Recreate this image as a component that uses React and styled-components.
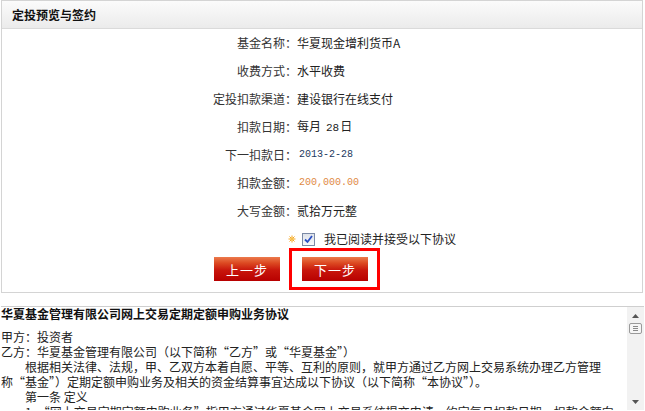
import React from 'react';
import styled, { createGlobalStyle } from 'styled-components';

const Global = createGlobalStyle`
  html, body { margin: 0; padding: 0; background: #fff; }
  body {
    font-family: "Noto Sans CJK SC", "Liberation Sans", sans-serif;
    font-size: 12px;
    color: #333;
    overflow: hidden;
  }
`;

const Page = styled.div`
  width: 645px;
  height: 411px;
  overflow: hidden;
  padding-left: 1px;
  box-sizing: border-box;
`;

const Panel = styled.section`
  width: 642px;
  height: 293px;
  box-sizing: border-box;
  border: 1px solid #d4d4d4;
  display: flex;
  flex-direction: column;
`;

const Header = styled.h2`
  margin: 0;
  height: 27px;
  box-sizing: content-box;
  border-bottom: 1px solid #dadada;
  background: linear-gradient(#fbfbfb, #ebebeb);
  display: flex;
  align-items: center;
  padding-left: 10px;
  font-size: 12px;
  font-weight: bold;
  color: #111;
`;

const Form = styled.div`
  display: flex;
  flex-direction: column;
`;

const Row = styled.div`
  display: grid;
  grid-template-columns: 295px 1fr;
  height: 28px;
  align-items: center;
  line-height: 12px;
`;

const Label = styled.div`
  text-align: right;
  color: #333;
  white-space: nowrap;
`;

const Value = styled.div`
  display: flex;
  align-items: ${p => (p.$baseline ? 'baseline' : 'center')};
  color: ${p => p.$color || '#222'};
  font-family: ${p => (p.$mono ? '"Liberation Mono", "DejaVu Sans Mono", monospace' : 'inherit')};
  font-size: ${p => (p.$mono ? '10px' : '12px')};
  padding-left: ${p => (p.$mono ? '2px' : '0')};
  white-space: nowrap;
`;

const Num = styled.span`
  font-family: "Liberation Mono", "DejaVu Sans Mono", monospace;
  font-size: 11px;
  margin: 0 1px 0 5px;
`;

const StarCell = styled.div`
  display: flex;
  justify-content: flex-end;
  align-items: center;
  padding-right: 1px;
`;

const CheckBox = styled.span`
  width: 13px;
  height: 13px;
  margin-left: 5px;
  box-sizing: border-box;
  border: 1px solid #7b8aa6;
  background: linear-gradient(#dfe3ea, #f7f8fa);
  display: flex;
  align-items: center;
  justify-content: center;
`;

const CheckText = styled.span`
  margin-left: 9px;
  color: #222;
`;

const ButtonRow = styled.div`
  display: flex;
  gap: 22px;
  padding-left: 212px;
  margin-top: 4px;
`;

const StepButton = styled.button`
  width: 66px;
  height: 24px;
  border: none;
  padding: 0;
  color: #fff;
  font-family: "Noto Sans CJK SC", sans-serif;
  font-size: 13px;
  letter-spacing: 1px;
  background: linear-gradient(#ec7a4c 0%, #dc4a22 25%, #c8160c 55%, #b80000 100%);
  cursor: pointer;
`;

const Highlight = styled.div`
  position: relative;
  &::after {
    content: '';
    position: absolute;
    top: -9px;
    bottom: -9px;
    left: -13px;
    right: -12px;
    border: 3px solid #ff0000;
    pointer-events: none;
  }
`;

const Agreement = styled.div`
  margin-top: 13px;
  width: 643px;
  height: 104px;
  box-sizing: border-box;
  border-top: 1px solid #cfcfcf;
  display: flex;
`;

const AgreementText = styled.div`
  flex: 1;
  overflow: hidden;
  color: #222;
`;

const AgreementTitle = styled.div`
  font-weight: bold;
  font-size: 12px;
  line-height: 13px;
  color: #111;
  margin-bottom: 9px;
  white-space: nowrap;
`;

const Line = styled.div`
  line-height: 15px;
  white-space: nowrap;
  padding-left: ${p => (p.$indent ? '24px' : '0')};
`;

const Scrollbar = styled.div`
  width: 17px;
  background: #f2f2f2;
  display: flex;
  flex-direction: column;
  align-items: center;
`;

const ScrollButton = styled.div`
  width: 17px;
  height: 17px;
  display: flex;
  align-items: center;
  justify-content: center;
`;

const Thumb = styled.div`
  width: 13px;
  height: 11px;
  box-sizing: border-box;
  border: 1px solid #9a9a9a;
  border-radius: 2px;
  background: #f6f6f6;
  display: flex;
  flex-direction: column;
  justify-content: center;
  gap: 1px;
  padding: 0 3px;
  margin-top: -1px;
`;

const Grip = styled.span`
  display: block;
  height: 1px;
  background: #8a8a8a;
`;

const Track = styled.div`
  flex: 1;
`;

const Star = () => (
  <svg width="8" height="8" viewBox="0 0 8 8">
    <g stroke="#f5a623" strokeWidth="1">
      <line x1="4" y1="0.5" x2="4" y2="7.5" />
      <line x1="0.5" y1="4" x2="7.5" y2="4" />
      <line x1="1.5" y1="1.5" x2="6.5" y2="6.5" />
      <line x1="6.5" y1="1.5" x2="1.5" y2="6.5" />
    </g>
    <circle cx="4" cy="4" r="1.6" fill="#f7c04a" />
  </svg>
);

const Tick = () => (
  <svg width="9" height="9" viewBox="0 0 9 9">
    <path d="M1 4.5 L3.5 7 L8 1" fill="none" stroke="#2a4fc4" strokeWidth="1.8" />
  </svg>
);

const Arrow = ({ down }) => (
  <svg width="7" height="4" viewBox="0 0 7 4">
    <path d={down ? 'M0 0 H7 L3.5 4 Z' : 'M0 4 H7 L3.5 0 Z'} fill="#555" />
  </svg>
);

const rows = [
  { label: '基金名称：', value: '华夏现金增利货币A' },
  { label: '收费方式：', value: '水平收费' },
  { label: '定投扣款渠道：', value: '建设银行在线支付' },
];

export default function App() {
  return (
    <>
      <Global />
      <Page>
        <Panel>
          <Header>定投预览与签约</Header>
          <Form>
            {rows.map(r => (
              <Row key={r.label}>
                <Label>{r.label}</Label>
                <Value>{r.value}</Value>
              </Row>
            ))}
            <Row>
              <Label>扣款日期：</Label>
              <Value $baseline>每月<Num>28</Num>日</Value>
            </Row>
            <Row>
              <Label>下一扣款日：</Label>
              <Value $mono $color="#233a60">2013-2-28</Value>
            </Row>
            <Row>
              <Label>扣款金额：</Label>
              <Value $mono $color="#e08a45">200,000.00</Value>
            </Row>
            <Row>
              <Label>大写金额：</Label>
              <Value>贰拾万元整</Value>
            </Row>
            <Row>
              <StarCell><Star /></StarCell>
              <Value>
                <CheckBox><Tick /></CheckBox>
                <CheckText>我已阅读并接受以下协议</CheckText>
              </Value>
            </Row>
          </Form>
          <ButtonRow>
            <StepButton>上一步</StepButton>
            <Highlight>
              <StepButton>下一步</StepButton>
            </Highlight>
          </ButtonRow>
        </Panel>
        <Agreement>
          <AgreementText>
            <AgreementTitle>华夏基金管理有限公司网上交易定期定额申购业务协议</AgreementTitle>
            <Line>甲方：投资者</Line>
            <Line>乙方：华夏基金管理有限公司（以下简称“乙方”或“华夏基金”）</Line>
            <Line $indent>根据相关法律、法规，甲、乙双方本着自愿、平等、互利的原则，就甲方通过乙方网上交易系统办理乙方管理</Line>
            <Line>称“基金”）定期定额申购业务及相关的资金结算事宜达成以下协议（以下简称“本协议”）。</Line>
            <Line $indent>第一条  定义</Line>
            <Line $indent>1、“网上交易定期定额申购业务”指甲方通过华夏基金网上交易系统提交申请，约定每月扣款日期、扣款金额向</Line>
          </AgreementText>
          <Scrollbar>
            <ScrollButton><Arrow /></ScrollButton>
            <Thumb><Grip /><Grip /><Grip /></Thumb>
            <Track />
            <ScrollButton><Arrow down /></ScrollButton>
          </Scrollbar>
        </Agreement>
      </Page>
    </>
  );
}
